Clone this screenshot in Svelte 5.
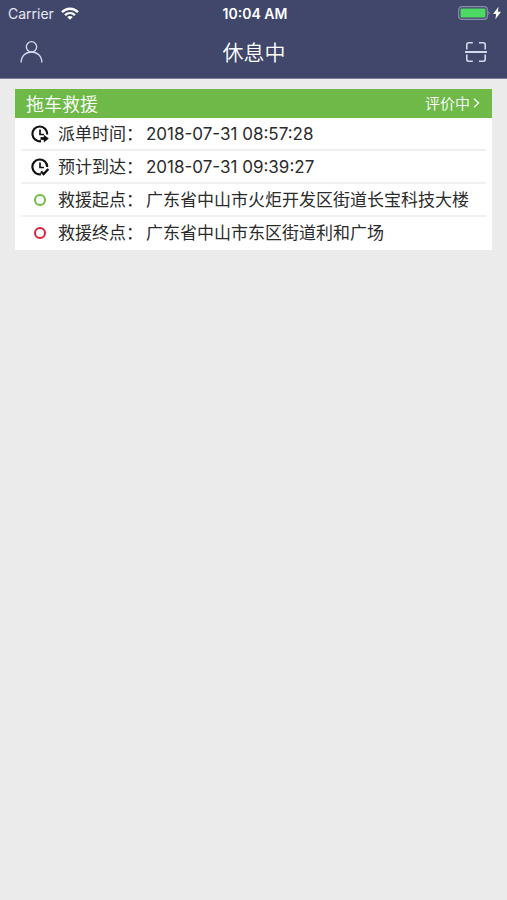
<script>
  const order = {
    type: '拖车救援',
    status: '评价中',
    rows: [
      { icon: 'dispatch', label: '派单时间：', value: '2018-07-31 08:57:28' },
      { icon: 'arrival', label: '预计到达：', value: '2018-07-31 09:39:27' },
      { icon: 'start', label: '救援起点：', value: '广东省中山市火炬开发区街道长宝科技大楼' },
      { icon: 'end', label: '救援终点：', value: '广东省中山市东区街道利和广场' }
    ]
  };
</script>

<div class="top">
  <div class="status-bar">
    <div class="carrier">
      <span>Carrier</span>
      <svg width="18" height="13" viewBox="0 0 18 13" fill="none" stroke="#fff" stroke-width="2.4">
        <path d="M1 5.2C5.5 .6 12.5 .6 17 5.2" />
        <path d="M4 8.2c2.9-2.8 7.1-2.8 10 0" />
        <path d="M9 12.8 6.2 10c1.6-1.5 4-1.5 5.6 0z" fill="#fff" stroke="none" />
      </svg>
    </div>
    <time>10:04 AM</time>
    <div class="battery">
      <svg width="44" height="14" viewBox="0 0 44 14">
        <rect x=".7" y=".7" width="28.6" height="12.6" rx="3" fill="none" stroke="#8b90aa" stroke-width="1.2" />
        <rect x="2.5" y="2.5" width="25" height="9" rx="1" fill="#4cd964" />
        <path d="M30.5 4.8c1.6.8 1.6 3.6 0 4.4z" fill="#8b90aa" />
        <path d="M40.6.8 35 8h3.2l-.8 5.2L43 5.8h-3.2z" fill="#fff" />
      </svg>
    </div>
  </div>

  <header>
    <button aria-label="个人中心">
      <svg width="23" height="24" viewBox="0 0 24 24" fill="none" stroke="#d5d8ec" stroke-width="1.4">
        <circle cx="12" cy="6.6" r="5.4" />
        <path d="M1.2 23C1.2 16 6 12 12 12s10.8 4 10.8 11" />
      </svg>
    </button>
    <h1>休息中</h1>
    <button aria-label="扫一扫">
      <svg width="22" height="20" viewBox="0 0 22 20" fill="none" stroke="#d5d8ec" stroke-width="1.6">
        <path d="M1.8 7.5V2.8q0-2 2-2h4M14 .8h4.2q2 0 2 2v4.7M20.2 12.5v4.7q0 2-2 2H14M7.8 19.2h-4q-2 0-2-2v-4.7" />
        <path d="M0 10h22" stroke-width="2" />
      </svg>
    </button>
  </header>
</div>

<main>
  <section class="order">
    <div class="order-header">
      <h2>{order.type}</h2>
      <a href="#status">
        {order.status}
        <svg width="7" height="10" viewBox="0 0 7 10" fill="none" stroke="#fff" stroke-width="1.2">
          <path d="m1 .8 4.6 4.2L1 9.2" />
        </svg>
      </a>
    </div>
    <ul>
      {#each order.rows as row}
        <li>
          <span class="icon">
            {#if row.icon === 'start' || row.icon === 'end'}
              <i class="dot {row.icon}"></i>
            {:else}
              <svg width="18" height="18" viewBox="0 0 18 18" fill="none" stroke="#111" stroke-width="2.2">
                {#if row.icon === 'dispatch'}
                  <path d="M16.2 9.5A7.4 7.4 0 1 0 10 16.2" />
                  <path d="M9 4.5v5h4" stroke-width="1.7" />
                  <path d="M9.5 13.5h4" stroke-width="2.8" />
                  <path d="m12.8 9.8 5 3.7-5 3.9z" fill="#111" stroke="none" />
                {:else}
                  <path d="M16.2 9A7.4 7.4 0 1 0 10 16.2" />
                  <path d="M9 4.5v5h4" stroke-width="1.7" />
                  <path d="m10 13.5 2.6 2.5 4.8-5" stroke-width="2.4" />
                {/if}
              </svg>
            {/if}
          </span>
          <span class="label">{row.label}</span>
          <span class="value">{row.value}</span>
        </li>
      {/each}
    </ul>
  </section>
</main>

<style>
  :global(body) {
    background: #ebebeb;
    color: #2b2b2b;
    font-family: Inter, 'Noto Sans CJK SC', sans-serif;
  }

  .top {
    background: #40476b;
    color: #fff;
    border-bottom: 1px solid #7c809a;
  }

  .status-bar {
    display: grid;
    grid-template-columns: 1fr auto 1fr;
    align-items: center;
    height: 26px;
    padding: 0 5px 0 8px;
    font-size: 14px;
  }

  .carrier {
    display: flex;
    align-items: center;
    gap: 7px;
    color: #e6e8f2;
  }

  time {
    font-weight: 600;
  }

  .battery {
    display: flex;
    justify-content: flex-end;
  }

  header {
    display: flex;
    align-items: center;
    justify-content: space-between;
    height: 52px;
    padding: 0 20px;
  }

  button {
    display: flex;
    padding: 0;
    border: 0;
    background: none;
  }

  h1,
  h2 {
    margin: 0;
    font-weight: 350;
  }

  h1 {
    padding-bottom: 2px;
    font-size: 21px;
  }

  main {
    padding: 10px 15px;
  }

  .order {
    background: #fff;
  }

  .order-header {
    display: flex;
    align-items: center;
    justify-content: space-between;
    height: 27px;
    padding: 0 12px 2px 11px;
    background: #6eb948;
    color: #fff;
  }

  h2 {
    font-size: 18px;
  }

  a {
    display: flex;
    align-items: center;
    gap: 3px;
    color: inherit;
    font-size: 15px;
    font-weight: 350;
    text-decoration: none;
  }

  ul {
    margin: 0;
    padding: 0 6px;
    list-style: none;
  }

  li {
    display: flex;
    align-items: center;
    min-height: 30px;
    padding: 1px 0 0 10px;
    border-bottom: 2px solid #f0f0f0;
    font-size: 17px;
    line-height: 24px;
  }

  li:last-child {
    border-bottom-color: transparent;
  }

  .icon {
    display: flex;
    flex: none;
    align-items: center;
    justify-content: center;
    width: 18px;
    margin-right: 9px;
  }

  .dot {
    width: 8px;
    height: 8px;
    border: 2px solid #6eb948;
    border-radius: 50%;
  }

  .dot.end {
    border-color: #d9213b;
  }

  .label {
    flex: none;
  }

  .value {
    margin-left: 3px;
  }
</style>
